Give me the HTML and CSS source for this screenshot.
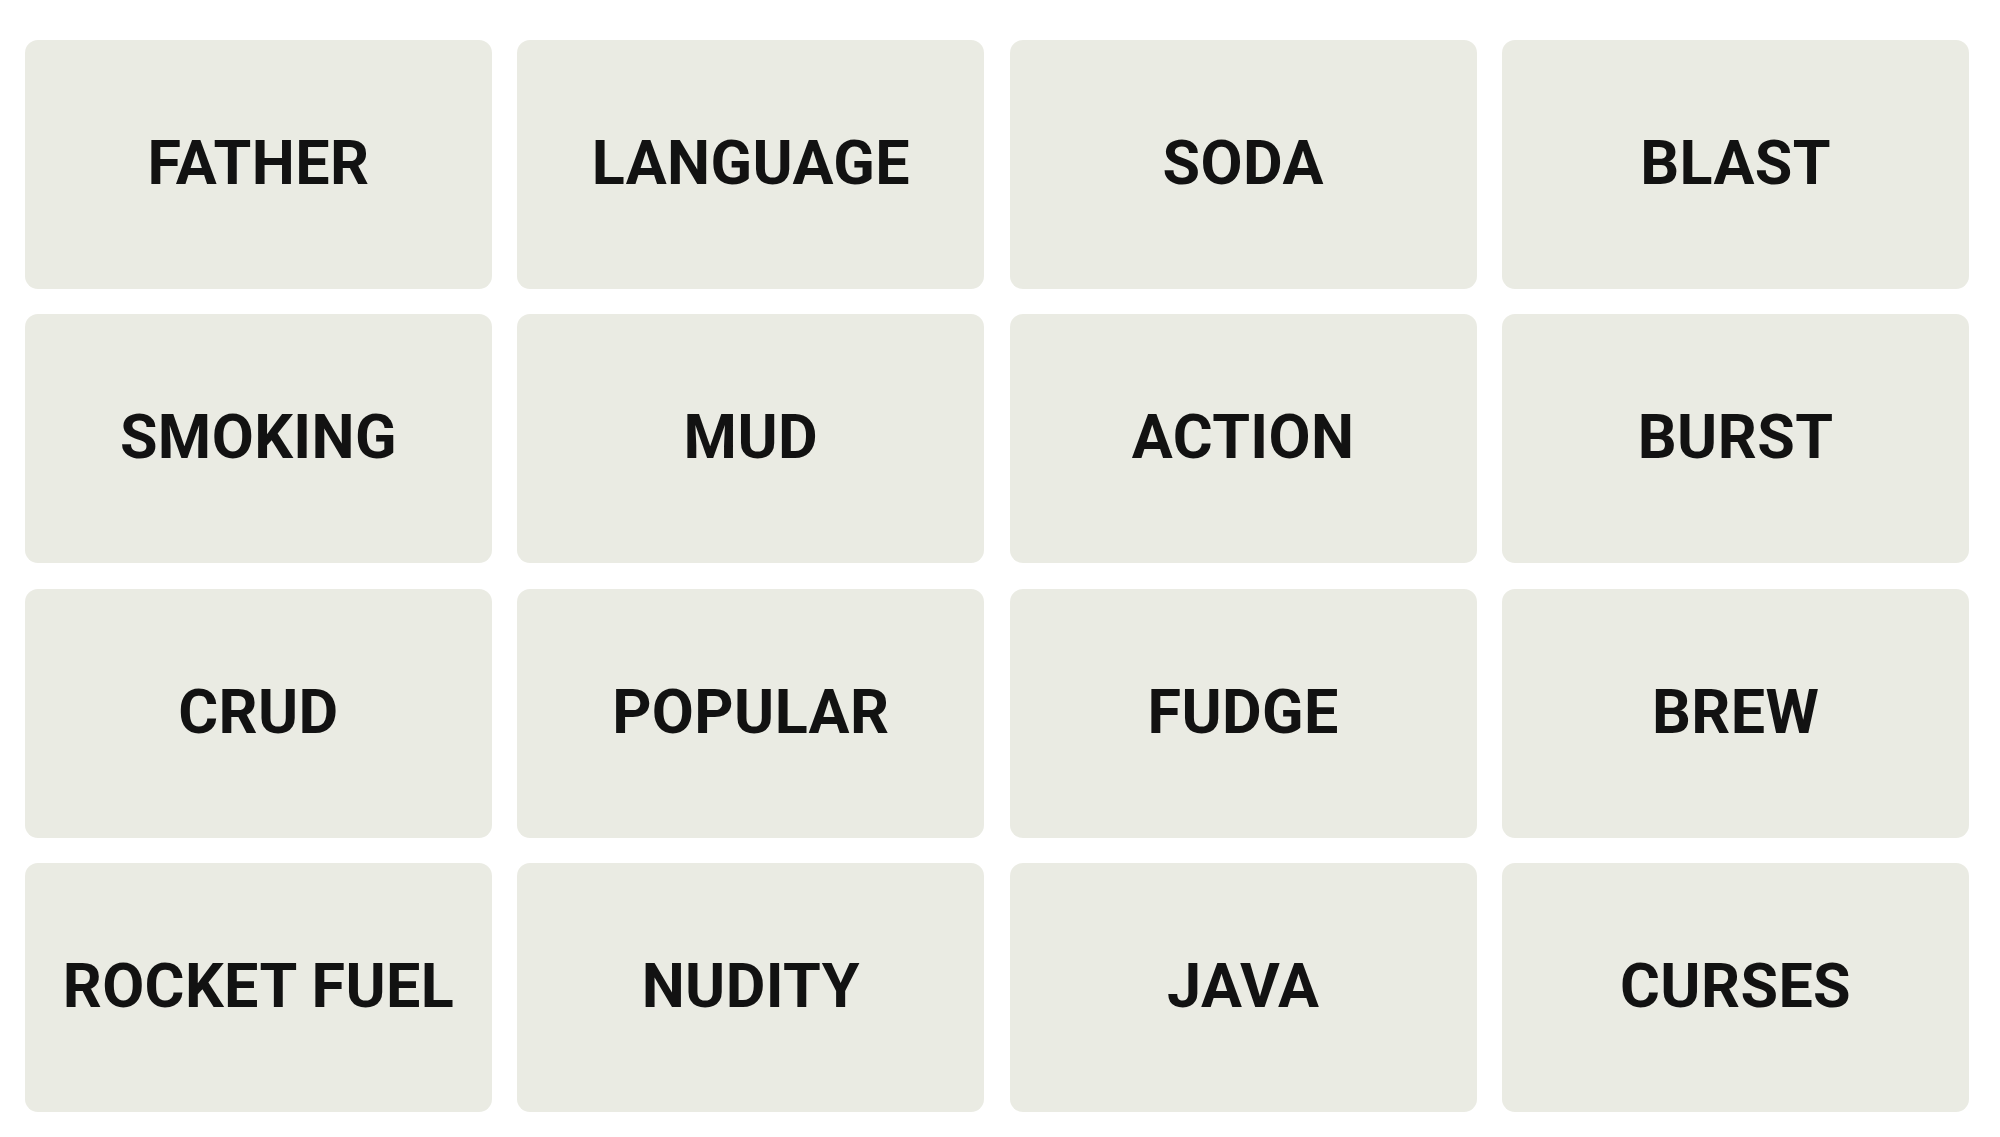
FILE: index.html
```html
<!DOCTYPE html>
<html lang="en">
<head>
    <meta charset="UTF-8">
    <title>Connections</title>
    <link rel="stylesheet" href="styles.css">
</head>
<body>
    <div class="board">
        <div class="tile">FATHER</div>
        <div class="tile">LANGUAGE</div>
        <div class="tile">SODA</div>
        <div class="tile">BLAST</div>
        <div class="tile">SMOKING</div>
        <div class="tile">MUD</div>
        <div class="tile">ACTION</div>
        <div class="tile">BURST</div>
        <div class="tile">CRUD</div>
        <div class="tile">POPULAR</div>
        <div class="tile">FUDGE</div>
        <div class="tile">BREW</div>
        <div class="tile">ROCKET FUEL</div>
        <div class="tile">NUDITY</div>
        <div class="tile">JAVA</div>
        <div class="tile">CURSES</div>
    </div>
</body>
</html>
```

FILE: styles.css
```css
/* Word grid */
body {
    margin: 0;
    background-color: #fff;
    font-family: Roboto, "Liberation Sans", sans-serif;
}
.board {
    display: grid;
    grid-template-columns: repeat(4, 1fr);
    grid-template-rows: repeat(4, 1fr);
    gap: 25.5px;
    width: 1944px;
    height: 1072px;
    margin: 40px 0 0 25px;
}
.tile {
    display: flex;
    align-items: center;
    justify-content: center;
    padding-bottom: 3px;
    background-color: #eaebe3;
    border-radius: 13px;
    color: #121212;
    font-size: 61px;
    font-weight: 700;
    letter-spacing: 0.4px;
    text-transform: uppercase;
    user-select: none;
}
```
